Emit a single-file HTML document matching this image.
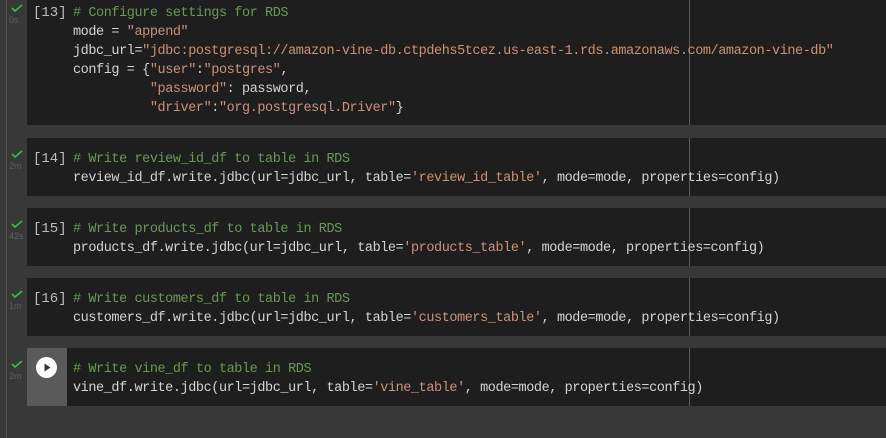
<!DOCTYPE html>
<html><head><style>
body{margin:0;width:886px;height:438px;background:#383838;position:relative;overflow:hidden;font-family:"Liberation Mono",monospace;}
.vl{position:absolute;left:6px;top:0;width:1px;height:438px;background:#555;}
.cell{position:absolute;left:27px;width:859px;background:#1e1e1e;overflow:hidden;}
.ruler{position:absolute;left:662px;top:0;bottom:0;width:1px;background:#5a5a5a;}
.code{position:absolute;left:46px;font-size:13.5px;line-height:19px;color:#d4d4d4;white-space:pre;letter-spacing:-0.42px;}
.num{position:absolute;left:6px;font-size:14px;line-height:19px;color:#bdbdbd;white-space:pre;}
.c{color:#6a9955}.s{color:#ce9178}
.chk{position:absolute;left:11px;width:12px;height:8px;}
.t{position:absolute;left:9px;font-family:"Liberation Sans",sans-serif;font-size:9px;color:#5e5e5e;}
.play{position:absolute;left:0;top:0;width:40px;height:58px;background:#5a5a5a;}
.pc{position:absolute;left:9px;top:9px;width:21px;height:21px;border-radius:50%;background:#fff;}
</style></head><body>
<div class="vl"></div>

<div class="cell" style="top:-8px;height:133px"><div class="ruler"></div>
<div class="num" style="top:12px">[13]</div>
<div class="code" style="top:12px"><span class="c"># Configure settings for RDS</span>
mode = <span class="s">"append"</span>
jdbc_url=<span class="s">"jdbc:postgresql://amazon-vine-db.ctpdehs5tcez.us-east-1.rds.amazonaws.com/amazon-vine-db"</span>
config = {<span class="s">"user"</span>:<span class="s">"postgres"</span>,
          <span class="s">"password"</span>: password,
          <span class="s">"driver"</span>:<span class="s">"org.postgresql.Driver"</span>}</div></div>
<svg class="chk" style="top:4px" viewBox="0 0 12 8"><path d="M1 4l3 3 7-6" stroke="#3fb950" stroke-width="1.6" fill="none"/></svg>
<div class="t" style="top:15px">0s</div>

<div class="cell" style="top:138px;height:58px"><div class="ruler"></div>
<div class="num" style="top:12px">[14]</div>
<div class="code" style="top:12px"><span class="c"># Write review_id_df to table in RDS</span>
review_id_df.write.jdbc(url=jdbc_url, table=<span class="s">'review_id_table'</span>, mode=mode, properties=config)</div></div>
<svg class="chk" style="top:150px" viewBox="0 0 12 8"><path d="M1 4l3 3 7-6" stroke="#3fb950" stroke-width="1.6" fill="none"/></svg>
<div class="t" style="top:161px">2m</div>

<div class="cell" style="top:208px;height:58px"><div class="ruler"></div>
<div class="num" style="top:12px">[15]</div>
<div class="code" style="top:12px"><span class="c"># Write products_df to table in RDS</span>
products_df.write.jdbc(url=jdbc_url, table=<span class="s">'products_table'</span>, mode=mode, properties=config)</div></div>
<svg class="chk" style="top:220px" viewBox="0 0 12 8"><path d="M1 4l3 3 7-6" stroke="#3fb950" stroke-width="1.6" fill="none"/></svg>
<div class="t" style="top:231px">42s</div>

<div class="cell" style="top:278px;height:58px"><div class="ruler"></div>
<div class="num" style="top:12px">[16]</div>
<div class="code" style="top:12px"><span class="c"># Write customers_df to table in RDS</span>
customers_df.write.jdbc(url=jdbc_url, table=<span class="s">'customers_table'</span>, mode=mode, properties=config)</div></div>
<svg class="chk" style="top:290px" viewBox="0 0 12 8"><path d="M1 4l3 3 7-6" stroke="#3fb950" stroke-width="1.6" fill="none"/></svg>
<div class="t" style="top:301px">1m</div>

<div class="cell" style="top:348px;height:58px"><div class="ruler"></div>
<div class="play"><div class="pc"><svg width="21" height="21" viewBox="0 0 21 21"><path d="M8.5 6.5v8l6-4z" fill="#333"/></svg></div></div>
<div class="code" style="top:12px"><span class="c"># Write vine_df to table in RDS</span>
vine_df.write.jdbc(url=jdbc_url, table=<span class="s">'vine_table'</span>, mode=mode, properties=config)</div></div>
<svg class="chk" style="top:360px" viewBox="0 0 12 8"><path d="M1 4l3 3 7-6" stroke="#3fb950" stroke-width="1.6" fill="none"/></svg>
<div class="t" style="top:371px">2m</div>
</body></html>
